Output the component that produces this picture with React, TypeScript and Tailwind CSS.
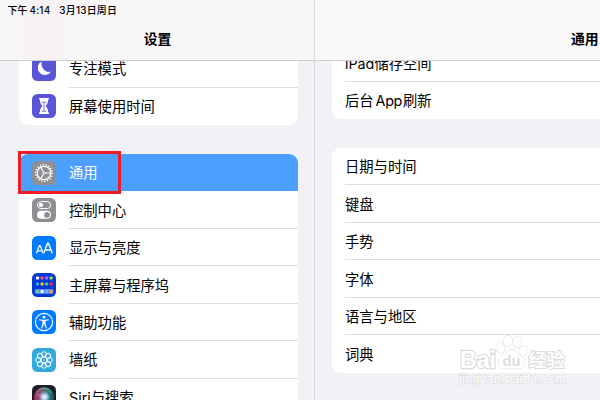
import type { ReactNode } from 'react';

function Tile({ className, children }: { className: string; children: ReactNode }) {
  return (
    <span className={`h-6 w-6 shrink-0 overflow-hidden rounded-[5.5px] ${className}`}>
      <svg viewBox="0 0 24 24" className="block h-6 w-6" fill="none">
        {children}
      </svg>
    </span>
  );
}

const MoonIcon = () => (
  <Tile className="bg-[#5856d6]">
    <path d="M9.7 4.6A7.1 7.1 0 1 0 19 14.6C13.6 16.4 8.4 11 9.7 4.6Z" fill="#fff" />
  </Tile>
);

const HourglassIcon = () => (
  <Tile className="bg-[#5856d6]">
    <path
      d="M7.2 4h9.6v1.8h-.7c0 3.2-1 4.6-2.6 6.2 1.6 1.6 2.6 3 2.6 6.2h.7V20H7.2v-1.8h.7c0-3.2 1-4.6 2.6-6.2-1.6-1.6-2.6-3-2.6-6.2h-.7Z"
      fill="#fff"
    />
    <path d="M9.6 8.2h4.8M9.6 17.2h4.8M12 9v8" stroke="#6664da" strokeWidth=".9" />
  </Tile>
);

const GearIcon = () => (
  <Tile className="bg-[#8e8e93]">
    <circle cx="12" cy="12" r="8.2" stroke="#fff" strokeWidth="1.8" strokeDasharray="1.2 1.662" />
    <circle cx="12" cy="12" r="6.7" stroke="#fff" strokeWidth="1.2" />
    <path d="M12 12h6.5M12 12 8.7 6.3M12 12l-3.3 5.7" stroke="#fff" strokeWidth="1.1" />
    <circle cx="12" cy="12" r="1.2" fill="#8e8e93" stroke="#fff" strokeWidth=".8" />
  </Tile>
);

const TogglesIcon = () => (
  <Tile className="bg-[#8e8e93]">
    <rect x="5.4" y="3.6" width="13.2" height="7" rx="3.5" stroke="#fff" strokeWidth="1" />
    <circle cx="9" cy="7.1" r="2.2" fill="#fff" />
    <rect x="5" y="12.8" width="14" height="8" rx="4" fill="#fff" />
    <circle cx="15" cy="16.8" r="2.9" fill="#8e8e93" />
  </Tile>
);

const TextSizeIcon = () => (
  <Tile className="bg-[#007aff]">
    <path d="m4.4 17.2 3-7.7h.7l3 7.7M5.4 14.8h4.7" stroke="#fff" strokeWidth="1.2" />
    <path d="m11.7 17.2 3.9-10h.8l3.9 10M13 14h6" stroke="#fff" strokeWidth="1.4" />
  </Tile>
);

const dots: [number, number, string][] = [
  [5.6, 5, '#fff'], [10.1, 5, '#ff4d78'], [14.6, 5, '#b564e8'], [19.1, 5, '#a9df46'],
  [5.6, 11, '#36a9ff'], [10.1, 11, '#ffc400'], [14.6, 11, '#45d765'], [19.1, 11, '#ff304c'],
  [5.6, 18.5, '#5fe08c'], [10.1, 18.5, '#fff'], [14.6, 18.5, '#45c8ff'], [19.1, 18.5, '#ff9a43'],
];

const HomeScreenIcon = () => (
  <Tile className="bg-[#0638d4]">
    <rect x="2.8" y="16" width="18.6" height="5" rx="1.2" fill="#5a84ea" />
    {dots.map(([x, y, c]) => (
      <rect key={`${x}-${y}`} x={x - 1.5} y={y - 1.5} width="3" height="3" rx=".8" fill={c} />
    ))}
  </Tile>
);

const AccessibilityIcon = () => (
  <Tile className="bg-[#007aff]">
    <circle cx="12" cy="12" r="8.6" stroke="#fff" strokeWidth="1.1" />
    <circle cx="12" cy="7.2" r="1.4" fill="#fff" />
    <path
      d="M7.2 9.2 10.8 9.8h2.4l3.6-.6.1 1-3.3.8v2.7l1.3 4.5-1 .3-1.7-4.2h-.4l-1.7 4.2-1-.3 1.3-4.5V11l-3.3-.8Z"
      fill="#fff"
    />
  </Tile>
);

const FlowerIcon = () => (
  <Tile className="bg-[#33aadc]">
    {[0, 45, 90, 135, 180, 225, 270, 315].map((a) => (
      <circle key={a} cx="12" cy="6.3" r="2.5" stroke="#fff" strokeWidth=".95" transform={`rotate(${a} 12 12)`} />
    ))}
    <circle cx="12" cy="12" r="3" stroke="#fff" strokeWidth="1" />
    <circle cx="12" cy="12" r=".7" stroke="#fff" strokeWidth=".5" opacity=".7" />
  </Tile>
);

const SiriIcon = () => (
  <Tile className="bg-[#201c2c]">
    <defs>
      <linearGradient id="orb" x1="0" y1="0" x2="1" y2="0.2">
        <stop offset="0" stopColor="#b0204c" />
        <stop offset=".42" stopColor="#8a5570" />
        <stop offset=".7" stopColor="#277f7c" />
        <stop offset="1" stopColor="#12645c" />
      </linearGradient>
      <radialGradient id="core">
        <stop offset="0" stopColor="#fff" />
        <stop offset=".4" stopColor="#c9e2fa" stopOpacity=".85" />
        <stop offset="1" stopColor="#6aa0e0" stopOpacity="0" />
      </radialGradient>
    </defs>
    <circle cx="12" cy="12" r="10" fill="url(#orb)" />
    <path d="M4 8.2Q12-1.8 20 8.2" stroke="#49c99e" strokeWidth="1" opacity=".75" />
    <path d="M3 12Q6 6 12 11T21 10Q17 15 12 12T3 12" fill="#d85a9c" opacity=".7" />
    <circle cx="12.5" cy="12" r="6.5" fill="url(#core)" />
  </Tile>
);

const focusItems = [
  { label: '专注模式', icon: <MoonIcon /> },
  { label: '屏幕使用时间', icon: <HourglassIcon /> },
];

const generalItems = [
  { label: '通用', icon: <GearIcon />, selected: true },
  { label: '控制中心', icon: <TogglesIcon /> },
  { label: '显示与亮度', icon: <TextSizeIcon /> },
  { label: '主屏幕与程序坞', icon: <HomeScreenIcon /> },
  { label: '辅助功能', icon: <AccessibilityIcon /> },
  { label: '墙纸', icon: <FlowerIcon /> },
  { label: 'Siri与搜索', icon: <SiriIcon /> },
];

function SideRow({ label, icon, selected, divider }: { label: string; icon: ReactNode; selected?: boolean; divider?: boolean }) {
  return (
    <div className={`flex h-[37.45px] shrink-0 items-center pl-[13px] ${selected ? 'bg-[#4a9fff] text-white' : ''}`}>
      {icon}
      <div className={`ml-[13px] flex h-full flex-1 items-center border-b ${divider ? 'border-[#dededf]' : 'border-transparent'}`}>
        <span className="pt-[2px]">{label}</span>
      </div>
    </div>
  );
}

function DetailRow({ label, divider }: { label: ReactNode; divider: boolean }) {
  return (
    <div className="h-[37.45px] shrink-0 pl-[13px]">
      <div className={`flex h-full items-center border-b ${divider ? 'border-[#dededf]' : 'border-transparent'}`}>
        <span className="pt-[2.5px]">{label}</span>
      </div>
    </div>
  );
}

function Watermark() {
  return (
    <svg
      viewBox="0 0 120 60"
      className="pointer-events-none absolute left-[454px] top-[330px] h-[60px] w-[120px]"
      fill="#fff"
      stroke="#dcdce0"
      strokeWidth="1"
      paintOrder="stroke"
    >
      <text x="6" y="38" fontSize="24" fontWeight="700" fontFamily="Liberation Sans, sans-serif" textLength="36" strokeWidth="2.4" lengthAdjust="spacingAndGlyphs">Bai</text>
      <ellipse cx="46.5" cy="18" rx="4.2" ry="5.2" transform="rotate(-15 46.5 18)" />
      <ellipse cx="54" cy="11" rx="4.2" ry="5.6" />
      <ellipse cx="63.3" cy="12" rx="4.2" ry="5.6" transform="rotate(12 63.3 12)" />
      <ellipse cx="69.5" cy="20.5" rx="4.2" ry="5" transform="rotate(20 69.5 20.5)" />
      <path d="M57.5 19.5c-5 0-6 4-9 6.5-3 2.6-5 5-3.7 8.8 1.7 4.8 7.2 3.8 12.7 3.8s11 1 12.7-3.8c1.3-3.8-.7-6.2-3.7-8.8-3-2.5-4-6.5-9-6.5Z" />
      <text x="48.5" y="36" fontSize="15" fontWeight="700" fontFamily="Liberation Sans, sans-serif" textLength="18" fill="#dcdce0" stroke="none" lengthAdjust="spacingAndGlyphs">du</text>
      <text x="74.5" y="37" fontSize="18.5" fontWeight="700" fontFamily="Noto Sans CJK SC, sans-serif" textLength="36" strokeWidth="2" lengthAdjust="spacingAndGlyphs">经验</text>
      <text x="5" y="52.5" fontSize="12.5" fontFamily="Liberation Sans, sans-serif" textLength="107" strokeWidth="1.2" lengthAdjust="spacingAndGlyphs">jingyan.baidu.com</text>
    </svg>
  );
}

const details = ['日期与时间', '键盘', '手势', '字体', '语言与地区', '词典'];

export default function App() {
  return (
    <div className="relative flex h-[400px] w-[600px] flex-col overflow-hidden bg-[#f2f1f6] font-['Inter','Noto_Sans_CJK_SC',sans-serif] text-[14.3px] leading-5 text-black">
      <header className="flex h-[61px] shrink-0 border-b border-[#cfcfd1] bg-[#f9f9fa]">
        <div className="w-[315px] border-r border-[#dcdce0] bg-linear-to-r from-[#f7f6f7] from-4% via-[#f9f0f2] via-14% to-[#f7f7f7] to-24%">
          <div className="flex h-5 items-center gap-[9px] whitespace-nowrap pl-[7.5px] text-[9.9px] font-medium tracking-[0.1px]">
            <span>下午<span className="ml-[2px] tracking-[0.2px]">4:14</span></span>
            <span className="tracking-[0.25px]">3月13日周日</span>
          </div>
          <h1 className="pl-px pt-[9px] text-center text-[13.8px] font-bold">设置</h1>
        </div>
        <div className="flex-1 whitespace-nowrap pl-[256px] pt-[29px] text-[13.8px] font-bold">通用</div>
      </header>

      <div className="flex min-h-0 flex-1">
        <aside className="w-[315px] shrink-0 overflow-hidden border-r border-[#d9d9de] pl-[19px] pr-4">
          <div className="flex h-16 flex-col justify-end overflow-hidden rounded-b-[9px] bg-white">
            {focusItems.map((item, i) => (
              <SideRow key={item.label} {...item} divider={i === 0} />
            ))}
          </div>
          <div className="mt-[29px] flex flex-col overflow-hidden rounded-t-[9px] bg-white">
            {generalItems.map((item) => (
              <SideRow key={item.label} {...item} divider={!item.selected} />
            ))}
          </div>
        </aside>

        <main className="flex-1 overflow-hidden pl-[17px]">
          <div className="flex h-[58px] flex-col justify-end overflow-hidden rounded-bl-[9px] bg-white">
            <DetailRow label="iPad储存空间" divider />
            <DetailRow label={<>后台<span className="ml-[2px] mr-px tracking-[-0.3px]">App</span>刷新</>} divider={false} />
          </div>
          <div className="mt-[29px] overflow-hidden rounded-l-[9px] bg-white">
            {details.map((label, i) => (
              <DetailRow key={label} label={label} divider={i < details.length - 1} />
            ))}
          </div>
        </main>
      </div>

      <div className="pointer-events-none absolute left-[18px] top-[151px] h-[43px] w-[103px] border-[3px] border-[#ee1c25]" />
      <Watermark />
    </div>
  );
}
